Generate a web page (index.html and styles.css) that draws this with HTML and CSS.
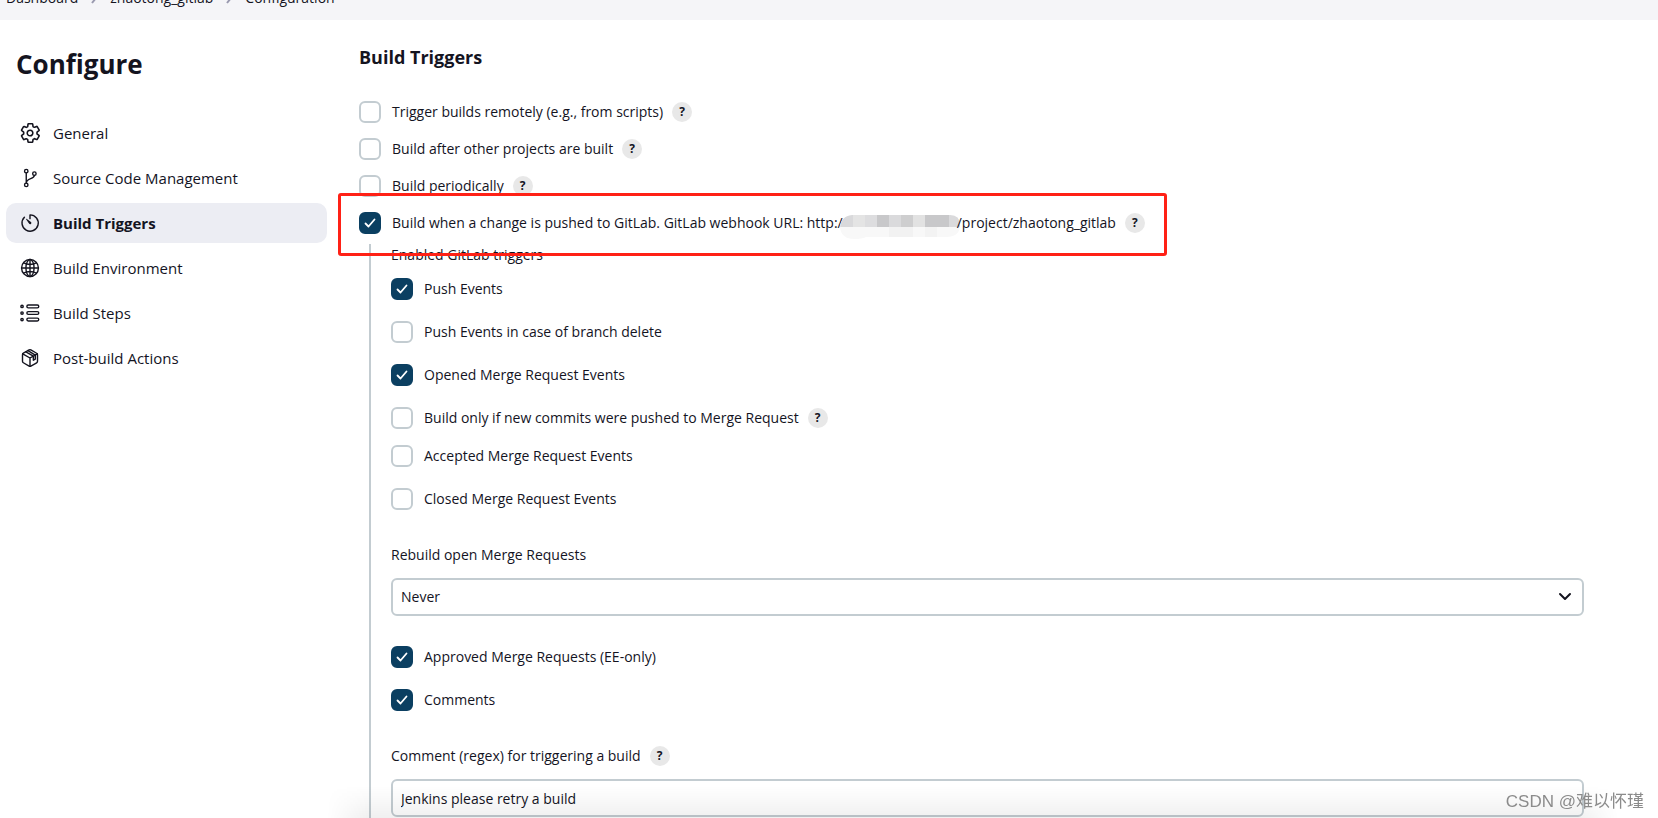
FILE: index.html
```html
<!DOCTYPE html>
<html lang="en">
<head>
    <meta charset="UTF-8">
    <meta name="viewport" content="width=device-width, initial-scale=1.0">
    <title>zhaotong_gitlab Config [Jenkins]</title>
    <link rel="stylesheet" href="styles.css">
</head>
<body>
    <nav class="breadcrumbs" aria-label="Breadcrumbs">
        <a href="#">Dashboard</a>
        <svg class="crumb-arrow" viewBox="0 0 8 12"><path d="M2 1l4 5-4 5"/></svg>
        <a href="#">zhaotong_gitlab</a>
        <svg class="crumb-arrow" viewBox="0 0 8 12"><path d="M2 1l4 5-4 5"/></svg>
        <a href="#">Configuration</a>
    </nav>

    <div class="page">
        <aside class="side-panel">
            <h1>Configure</h1>
            <nav class="tasks">
                <a class="task" href="#general">
                    <svg class="icon" viewBox="28 28 456 456"><path d="M262.3 192.6a64 64 0 1057.7 57.8 64.2 64.2 0 00-57.7-57.8zM416.4 256a154 154 0 01-1.5 20.8l45.2 35.5a10.8 10.8 0 012.5 13.7l-42.8 74a10.8 10.8 0 01-13.1 4.6l-44.9-18.1a16.1 16.1 0 00-15.2 1.7 164.8 164.8 0 01-13.8 8 15.9 15.9 0 00-8.4 12l-6.7 47.9a11.1 11.1 0 01-10.7 9.2h-85.6a11.1 11.1 0 01-10.7-8.9l-6.7-47.8a16.1 16.1 0 00-8.6-12.2 156 156 0 01-13.7-8 16 16 0 00-15.2-1.6L121.6 404.9a10.8 10.8 0 01-13.1-4.6l-42.8-74a10.8 10.8 0 012.5-13.7l38.3-30a16.1 16.1 0 006-14.2 154 154 0 010-25 16 16 0 00-6.1-14L68.2 199.5a10.8 10.8 0 01-2.3-13.5l42.8-74a10.8 10.8 0 0113.1-4.6l44.9 18.1a16.1 16.1 0 0015.2-1.7 164.8 164.8 0 0113.8-8 15.9 15.9 0 008.4-12l6.7-47.9A11.1 11.1 0 01221.5 46.7h85.6a11.1 11.1 0 0110.7 8.9l6.7 47.8a16.1 16.1 0 008.6 12.2 156 156 0 0113.7 8 16 16 0 0015.2 1.6l44.8-18.1a10.8 10.8 0 0113.1 4.6l42.8 74a10.8 10.8 0 01-2.5 13.7l-38.3 30a16.1 16.1 0 00-6.1 14.2c.3 4.1.6 8.2.6 12.4z"/></svg>
                    General
                </a>
                <a class="task" href="#scm">
                    <svg class="icon" viewBox="0 0 512 512"><circle cx="160" cy="80" r="44"/><circle cx="160" cy="432" r="44"/><circle cx="368" cy="144" r="44"/><path d="M160 124v264M368 188c0 110-208 60-208 200"/></svg>
                    Source Code Management
                </a>
                <a class="task active" href="#triggers">
                    <svg class="icon" viewBox="0 0 512 512"><path d="M112.9 108.5A208 208 0 1 0 256 48v96"/><path class="solid" d="M278 280a30 30 0 0 1-43-3l-76-108c-7-11 6-24 17-17l105 79a32 32 0 0 1-3 49z"/></svg>
                    Build Triggers
                </a>
                <a class="task" href="#environment">
                    <svg class="icon" viewBox="0 0 512 512"><circle cx="256" cy="256" r="216"/><ellipse cx="256" cy="256" rx="104" ry="216"/><path d="M256 40v432M40 256h432M96 126c90 52 230 52 320 0M96 386c90-52 230-52 320 0"/></svg>
                    Build Environment
                </a>
                <a class="task" href="#steps">
                    <svg class="icon" viewBox="0 0 512 512"><rect x="176" y="52" width="304" height="72" rx="36"/><rect x="176" y="220" width="304" height="72" rx="36"/><rect x="176" y="388" width="304" height="72" rx="36"/><circle cx="52" cy="88" r="30"/><circle cx="52" cy="256" r="30"/><circle cx="52" cy="424" r="30"/></svg>
                    Build Steps
                </a>
                <a class="task" href="#post-build">
                    <svg class="icon" viewBox="0 0 512 512"><path d="M448 341V171a44 44 0 0 0-22-37L278 49a44 44 0 0 0-44 0L86 134a44 44 0 0 0-22 37v170a44 44 0 0 0 22 37l148 85a44 44 0 0 0 44 0l148-85a44 44 0 0 0 22-37z"/><path d="M70 150l186 106 186-106M256 256v212M150 98l192 110v106l50-30V180L204 66"/></svg>
                    Post-build Actions
                </a>
            </nav>
        </aside>

        <main class="main-panel">
            <h2>Build Triggers</h2>
            <form class="triggers">
                <div class="row">
                    <label><input type="checkbox">Trigger builds remotely (e.g., from scripts)</label>
                    <button type="button" class="help">?</button>
                </div>
                <div class="row">
                    <label><input type="checkbox">Build after other projects are built</label>
                    <button type="button" class="help">?</button>
                </div>
                <div class="row">
                    <label><input type="checkbox">Build periodically</label>
                    <button type="button" class="help">?</button>
                </div>
                <div class="row highlighted">
                    <label><input type="checkbox" checked><span>Build when a change is pushed to GitLab. GitLab webhook URL: http:/<svg class="redacted" viewBox="0 0 120 24">
                        <defs><clipPath id="smudge"><path d="M12 0h98q10 0 10 10 0 12-14 12H26q-4 2-12 2Q2 24 0 13 1 1 12 0z"/></clipPath></defs>
                        <g clip-path="url(#smudge)">
                            <rect width="120" height="24" fill="#f8f8f8"/>
                            <rect width="13" height="12" fill="#d9d9db"/>
                            <rect x="13" width="12" height="12" fill="#e4e4e4"/>
                            <rect x="25" width="12" height="12" fill="#dddddf"/>
                            <rect x="37" width="12" height="12" fill="#c8c8ca"/>
                            <rect x="49" width="12" height="12" fill="#dadadc"/>
                            <rect x="61" width="12" height="12" fill="#cececf"/>
                            <rect x="73" width="12" height="12" fill="#e2e2e2"/>
                            <rect x="85" width="24" height="12" fill="#c8c8ca"/>
                            <rect x="109" width="11" height="12" fill="#dadadc"/>
                            <rect x="49" y="12" width="24" height="12" fill="#f2f2f2"/>
                            <rect x="85" y="12" width="12" height="12" fill="#f3f3f3"/>
                        </g>
                    </svg>/project/zhaotong_gitlab</span></label>
                    <button type="button" class="help">?</button>
                </div>

                <div class="nested">
                    <div class="group-label">Enabled GitLab triggers</div>
                    <div class="row wide"><label><input type="checkbox" checked>Push Events</label></div>
                    <div class="row wide"><label><input type="checkbox">Push Events in case of branch delete</label></div>
                    <div class="row wide"><label><input type="checkbox" checked>Opened Merge Request Events</label></div>
                    <div class="row">
                        <label><input type="checkbox">Build only if new commits were pushed to Merge Request</label>
                        <button type="button" class="help">?</button>
                    </div>
                    <div class="row wide"><label><input type="checkbox">Accepted Merge Request Events</label></div>
                    <div class="row wide"><label><input type="checkbox">Closed Merge Request Events</label></div>

                    <div class="field">
                        <div class="field-label"><label for="rebuild">Rebuild open Merge Requests</label></div>
                        <select id="rebuild" class="control">
                            <option>Never</option>
                            <option>On push to source branch</option>
                            <option>On push to source or target branch</option>
                        </select>
                    </div>

                    <div class="row wide"><label><input type="checkbox" checked>Approved Merge Requests (EE-only)</label></div>
                    <div class="row wide"><label><input type="checkbox" checked>Comments</label></div>

                    <div class="field">
                        <div class="field-label">
                            <label for="regex">Comment (regex) for triggering a build</label>
                            <button type="button" class="help">?</button>
                        </div>
                        <input type="text" id="regex" class="control" value="Jenkins please retry a build">
                    </div>
                </div>
            </form>
        </main>
    </div>

    <div class="bottom-shade"></div>
    <div class="watermark">CSDN @难以怀瑾</div>
</body>
</html>
```

FILE: styles.css
```css
* {
    box-sizing: border-box;
}
html {
    overflow: hidden auto;
    scrollbar-width: none;
}
body {
    margin: 0;
    background-color: #fff;
    color: #14141f;
    font-family: "Open Sans", "Noto Sans CJK SC", sans-serif;
    font-size: 14px;
    line-height: 22px;
}
a {
    color: inherit;
    text-decoration: none;
}
h1, h2 {
    margin: 0;
    font-weight: 700;
}

/* breadcrumb bar, partly scrolled off the top */
.breadcrumbs {
    display: flex;
    align-items: center;
    gap: 12px;
    height: 44px;
    margin-top: -24px;
    padding: 0 6px;
    background-color: #f5f5f8;
}
.crumb-arrow {
    width: 8px;
    height: 12px;
    fill: none;
    stroke: #9a9ab0;
    stroke-width: 2;
}

.page {
    display: flex;
    gap: 32px;
    padding: 0 74px 0 6px;
}

/* side panel */
.side-panel {
    flex: 0 0 321px;
    padding-top: 24px;
}
.side-panel h1 {
    padding-left: 10px;
    font-size: 26px;
    line-height: 40px;
}
.tasks {
    display: flex;
    flex-direction: column;
    gap: 5px;
    margin-top: 29px;
}
.task {
    display: flex;
    align-items: center;
    gap: 13px;
    height: 40px;
    padding: 0 14px;
    border-radius: 10px;
    font-size: 15px;
}
.task.active {
    background-color: #ecedf3;
    font-weight: 700;
}
.icon {
    width: 20px;
    height: 20px;
    fill: none;
    stroke: #14141f;
    stroke-width: 36;
    stroke-linecap: round;
    stroke-linejoin: round;
}
.icon .solid {
    fill: #14141f;
    stroke: none;
}

/* form */
.main-panel {
    flex: 1;
    min-width: 0;
    padding-top: 24px;
}
.main-panel h2 {
    font-size: 18px;
    line-height: 26px;
}
.triggers {
    margin-top: 23px;
}
.row {
    display: flex;
    align-items: center;
    gap: 9px;
    height: 37px;
}
.nested .row {
    height: 38px;
}
.nested .row.wide {
    height: 43px;
    padding-bottom: 5px;
}
.row label {
    display: flex;
    align-items: center;
    gap: 11px;
    white-space: nowrap;
}
input[type="checkbox"] {
    flex: none;
    appearance: none;
    width: 22px;
    height: 22px;
    margin: 0;
    border: 2px solid #c3ccd1;
    border-radius: 6px;
    background-color: #fff;
}
input[type="checkbox"]:checked {
    border-color: #0b3f61;
    background: #0b3f61 url("data:image/svg+xml,%3Csvg xmlns='http://www.w3.org/2000/svg' viewBox='0 0 18 18'%3E%3Cpath d='M4.5 9.5l3 3 6-7' fill='none' stroke='white' stroke-width='1.8' stroke-linecap='round' stroke-linejoin='round'/%3E%3C/svg%3E") center / 18px no-repeat;
}
.help {
    width: 20px;
    height: 20px;
    padding: 0;
    border: 0;
    border-radius: 50%;
    background-color: #e8e8e8;
    color: #14141f;
    font: 700 12px/20px "Open Sans", sans-serif;
}
.highlighted {
    position: relative;
    width: fit-content;
}
.highlighted::after {
    content: "";
    position: absolute;
    inset: -11px -22px -15px -21px;
    border: 3px solid #ff2116;
    border-radius: 3px;
    pointer-events: none;
}
.redacted {
    width: 120px;
    height: 24px;
    margin: -6px -3px;
    vertical-align: -5px;
}
.nested {
    margin: 3px 0 0 10px;
    padding-left: 20px;
    border-left: 2px solid #c3ccd1;
}
.group-label {
    height: 26px;
}
.field {
    padding: 21px 0 22px;
}
.field-label {
    display: flex;
    align-items: center;
    gap: 9px;
    margin-bottom: 12px;
}
.control {
    display: block;
    width: 100%;
    height: 38px;
    padding: 0 8px;
    border: 2px solid #c3ccd1;
    border-radius: 6px;
    background-color: #fff;
    color: #14141f;
    font: inherit;
}
select.control {
    appearance: none;
    background: #fff url("data:image/svg+xml,%3Csvg xmlns='http://www.w3.org/2000/svg' viewBox='0 0 14 14'%3E%3Cpath d='M2 4l5 5 5-5' fill='none' stroke='%2314141f' stroke-width='2' stroke-linecap='round' stroke-linejoin='round'/%3E%3C/svg%3E") right 10px center / 14px no-repeat;
}
.nested .field:last-child {
    padding-bottom: 1px;
}

.bottom-shade {
    position: fixed;
    right: 40px;
    bottom: 0;
    left: 327px;
    height: 32px;
    background: linear-gradient(transparent, rgba(0, 0, 0, 0.06));
    mask-image: linear-gradient(90deg, transparent, #000 40px, #000 calc(100% - 40px), transparent);
    pointer-events: none;
}
.watermark {
    position: fixed;
    right: 14px;
    bottom: 4px;
    color: #8b8b8b;
    font: 17px/24px "Liberation Sans", "Noto Sans CJK SC", sans-serif;
    pointer-events: none;
}
```
